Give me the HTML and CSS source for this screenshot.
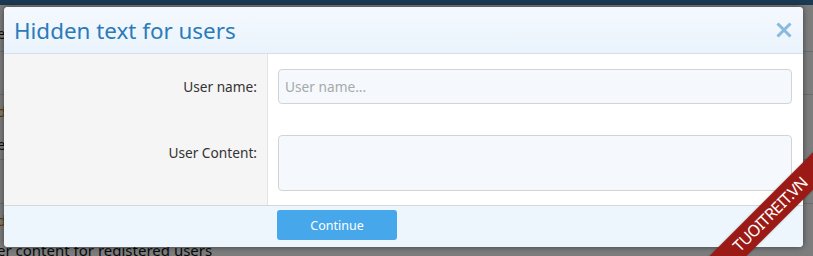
FILE: index.html
```html
<!DOCTYPE html>
<html lang="en">
	<head>
		<meta charset="UTF-8" />
		<title>Hidden text for users</title>
		<link rel="stylesheet" href="styles.css">
	</head>
	<body>
		<div class="page">
			<div class="page-top"></div>
			<div class="page-row r1"><span>e</span></div>
			<div class="page-row r2"></div>
			<div class="page-row r3"><span class="orange">d</span><span>e</span></div>
			<div class="page-row r4"></div>
			<div class="page-row r5"><span class="orange">d</span><span>er content for registered users</span></div>
		</div>

		<div class="overlay"></div>

		<div class="dialog">
			<div class="dialog-header">
				<h2>Hidden text for users</h2>
				<svg class="close" width="16" height="16" viewBox="0 0 16 16">
					<path d="M1.5 1.5 L14.5 14.5 M14.5 1.5 L1.5 14.5" stroke="#8ab9de" stroke-width="3" fill="none" />
				</svg>
			</div>
			<div class="dialog-body">
				<div class="form-row">
					<label class="form-label">User name:</label>
					<div class="form-field">
						<input type="text" class="input" placeholder="User name..." />
					</div>
				</div>
				<div class="form-row tall">
					<label class="form-label">User Content:</label>
					<div class="form-field">
						<textarea class="input textarea"></textarea>
					</div>
				</div>
			</div>
			<div class="dialog-footer">
				<div class="footer-spacer"></div>
				<button class="button">Continue</button>
			</div>
		</div>

		<div class="watermark">TUOITREIT.VN</div>
	</body>
</html>
```

FILE: styles.css
```css
* {
	margin: 0;
	padding: 0;
	box-sizing: border-box;
}

body {
	font-family: "Noto Sans", "Open Sans", sans-serif;
	background: #f0f0f0;
	color: #141414;
	width: 813px;
	height: 256px;
	overflow: hidden;
	position: relative;
}

.page {
	height: 256px;
	overflow: hidden;
}

.page-top {
	height: 5px;
	background: #36709f;
}

.page-row {
	border-bottom: 1px solid #d0d0d0;
	font-size: 15px;
	margin-left: -3px;
	display: flex;
	flex-direction: column;
}

.page-row span {
	line-height: 33px;
}

.page-row .orange {
	color: #c26a00;
}

.r1 {
	height: 47px;
	padding-top: 12px;
}

.r2 {
	height: 43px;
}

.r3 {
	height: 65px;
}

.r4 {
	height: 44px;
}

.r5 {
	border-bottom: none;
}

.r5 span:last-child {
	line-height: 26px;
}

.overlay {
	position: absolute;
	inset: 0;
	background: rgba(0, 0, 0, 0.48);
}

.dialog {
	position: absolute;
	left: 4px;
	top: 7px;
	width: 799px;
	height: 240px;
	background: white;
	border-radius: 4px;
	box-shadow: 0 0 6px rgba(0, 0, 0, 0.5);
	overflow: hidden;
	display: flex;
	flex-direction: column;
}

.dialog-header {
	height: 47px;
	background: linear-gradient(#f4f9fe, #eaf3fc);
	border-bottom: 1px solid #d7dfe6;
	display: flex;
	justify-content: space-between;
	align-items: center;
	padding: 0 11px 0 10px;
}

.dialog-header h2 {
	font-weight: normal;
	font-size: 22.4px;
	color: #2b7bb9;
}

.close {
	display: block;
	margin-top: -1px;
}

.dialog-body {
	flex: 1;
	display: flex;
	flex-direction: column;
	background: linear-gradient(to right, #f5f5f5 263px, #e3e3e3 263px, #e3e3e3 264px, white 264px);
}

.form-row {
	display: flex;
	align-items: center;
	padding-top: 15px;
}

.form-row.tall {
	padding-top: 31px;
	align-items: flex-start;
}

.form-label {
	width: 253px;
	text-align: right;
	font-size: 13.7px;
	color: #333;
}

.form-row.tall .form-label {
	padding-top: 8px;
}

.form-field {
	flex: 1;
	padding-left: 21px;
	padding-right: 11px;
}

.input {
	display: block;
	width: 100%;
	height: 35px;
	background: #f5f9fd;
	border: 1px solid #d3d3d3;
	border-radius: 4px;
	padding: 0 6px;
	font-family: "Noto Sans", sans-serif;
	font-size: 13.7px;
	color: #333;
}

.input::placeholder {
	color: #a8a8a8;
}

.textarea {
	height: 56px;
	resize: none;
}

.dialog-footer {
	height: 42px;
	background: #edf5fd;
	border-top: 1px solid #d5d8db;
	display: flex;
	align-items: flex-start;
	padding-top: 4px;
}

.footer-spacer {
	width: 273px;
}

.button {
	width: 120px;
	height: 30px;
	background: #47a7eb;
	border: none;
	border-radius: 3px;
	color: white;
	font-family: "Noto Sans", sans-serif;
	font-size: 12.5px;
}

.watermark {
	position: absolute;
	left: 675px;
	top: 201px;
	width: 190px;
	height: 26px;
	background: #9b1a16;
	color: white;
	font-size: 16px;
	line-height: 26px;
	text-align: center;
	transform: rotate(-45deg);
	letter-spacing: -0.6px;
	box-shadow: 0 0 2px rgba(0, 0, 0, 0.4);
}
```
